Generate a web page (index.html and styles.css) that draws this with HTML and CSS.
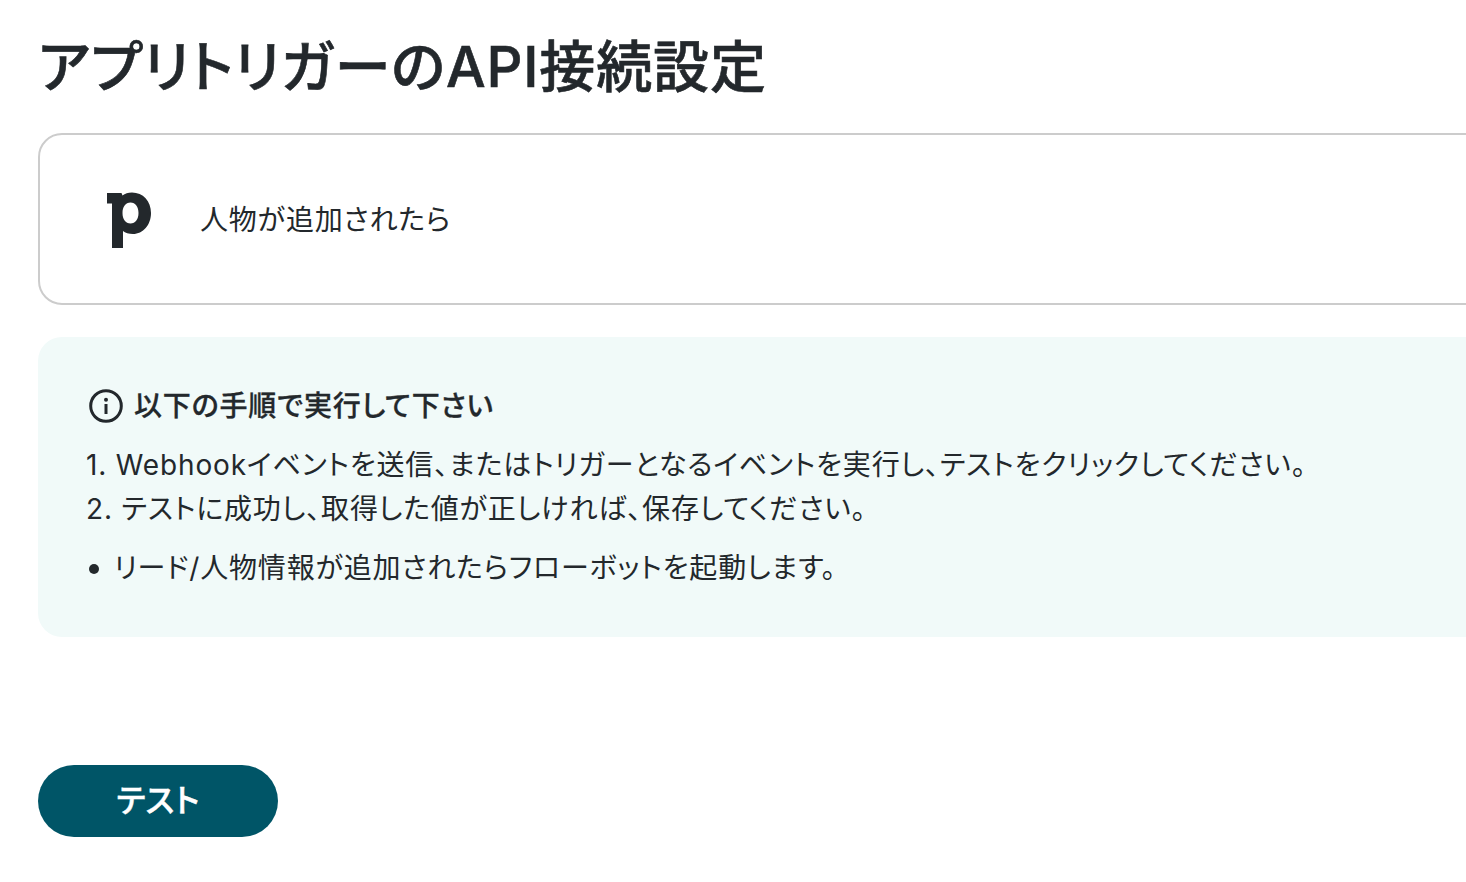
FILE: index.html
```html
<!DOCTYPE html>
<html lang="ja">
<head>
<meta charset="utf-8">
<title>アプリトリガーのAPI接続設定</title>
<link rel="stylesheet" href="styles.css">
</head>
<body>
<main class="page">
  <h1 class="title">アプリトリガーのAPI接続設定</h1>
  <section class="app-card">
    <svg class="logo" width="44" height="56" viewBox="0 0 44 56" aria-hidden="true">
      <path fill="#23282c" fill-rule="evenodd" d="M0 1H14.500L15.500 3.500C18 1.500 21 0.500 25 0.500C36 0.500 44 9 44 21C44 33 36 42 26 42C22 42 18 41 16 39V56H5V11.500H0ZM23.500 10.500C18.500 10.500 15.500 15 15.500 21C15.500 27 18.500 31.500 23.500 31.500C28.500 31.500 31.500 27 31.500 21C31.500 15 28.500 10.500 23.500 10.500Z"/>
    </svg>
    <span class="app-label">人物が追加されたら</span>
  </section>
  <section class="notice">
    <h2 class="notice-head">
      <svg class="info" width="34" height="34" viewBox="0 0 34 34" aria-hidden="true">
        <circle cx="17" cy="17" r="15.300" fill="none" stroke="#23282c" stroke-width="3"/>
        <circle cx="17" cy="10.800" r="2" fill="#23282c"/>
        <rect x="15.500" y="15" width="3" height="10" fill="#23282c"/>
      </svg>
      以下の手順で実行して下さい
    </h2>
    <ol class="steps">
      <li>1. Webhookイベントを送信、またはトリガーとなるイベントを実行し、テストをクリックしてください。</li>
      <li>2. テストに成功し、取得した値が正しければ、保存してください。</li>
    </ol>
    <ul class="notes">
      <li>リード/人物情報が追加されたらフローボットを起動します。</li>
    </ul>
  </section>
  <button class="test-btn" type="button"><span class="test-label">テスト</span></button>
</main>
</body>
</html>
```
FILE: styles.css
```css
* { box-sizing: border-box; }
html, body { margin: 0; height: 100%; overflow: hidden; background: #fff; }
body {
  font-family: "Inter", "Noto Sans CJK JP", sans-serif;
  color: #23282c;
  font-feature-settings: "palt";
}
.page { width: 1520px; padding: 31px 0 0 38px; }
.title { margin: 0; font-size: 56px; line-height: 72px; font-weight: 500; letter-spacing: 0.85px; -webkit-text-stroke: 0.6px #23282c; }
.app-card {
  margin-top: 30px;
  height: 172px;
  border: 2px solid #cccccc;
  border-radius: 24px;
  display: flex;
  align-items: center;
  padding-left: 67px;
}
.logo { flex: none; margin-top: 2px; }
.app-label { margin-left: 49px; margin-top: -3px; font-size: 28px; letter-spacing: 0.84px; }
.notice {
  margin-top: 32px;
  height: 300px;
  background: #f1faf9;
  border-radius: 24px;
  padding: 50px 0 0 48px;
}
.notice-head {
  margin: 0;
  display: flex;
  align-items: center;
  gap: 11px;
  font-size: 28px;
  line-height: 38px;
  font-weight: 500;
  letter-spacing: 0.84px;
  padding-left: 3px;
  -webkit-text-stroke: 0.3px #23282c;
}
.info { flex: none; }
.steps, .notes { margin: 0; padding: 0; list-style: none; font-size: 28px; line-height: 44px; letter-spacing: 0.84px; }
.steps { margin-top: 18px; }
.notes { margin-top: 15px; padding-left: 28px; position: relative; }
.notes li::before {
  content: "";
  position: absolute;
  left: 3px;
  top: 18px;
  width: 10px;
  height: 10px;
  border-radius: 50%;
  background: #23282c;
}
.test-btn {
  display: block;
  margin-top: 128px;
  width: 240px;
  height: 72px;
  border: 0;
  border-radius: 36px;
  background: #005567;
  color: #fff;
  font: 500 32px "Inter", "Noto Sans CJK JP", sans-serif;
  font-feature-settings: "palt";
  letter-spacing: 0.3px;
  -webkit-text-stroke: 0.4px #fff;
}
.test-label { display: block; margin-top: -7px; }
```
